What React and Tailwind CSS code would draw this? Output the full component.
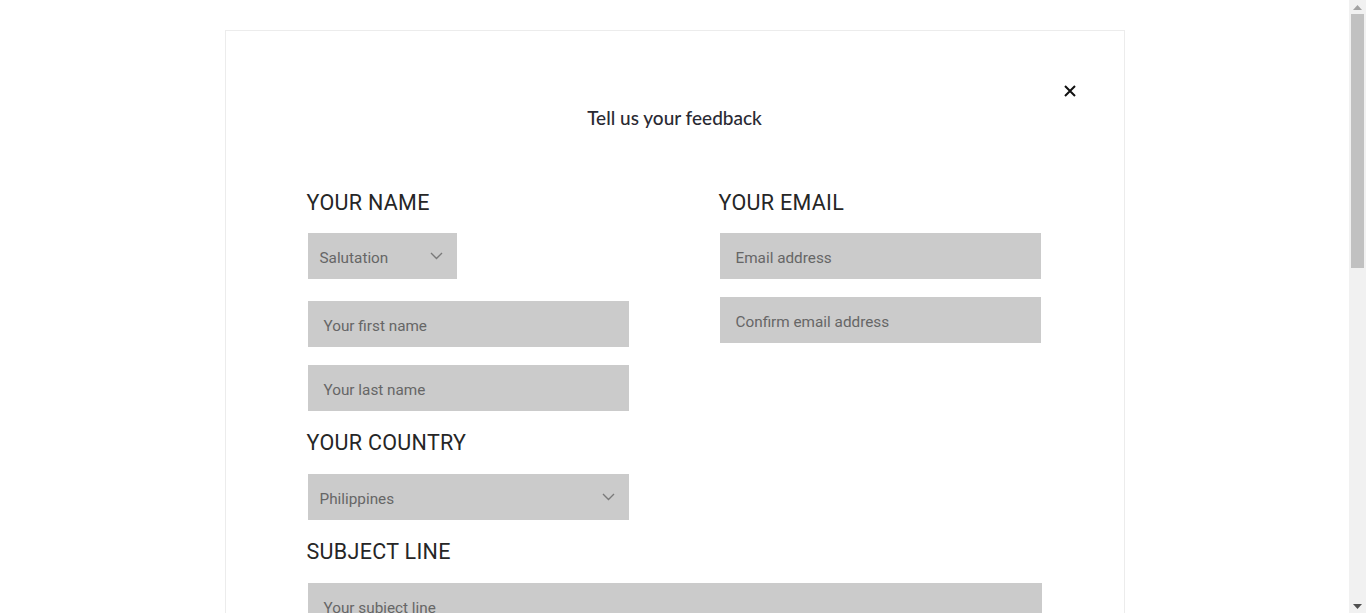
import React from "react";

function Chevron() {
  return (
    <svg width="13" height="8" viewBox="0 0 13 8" fill="none" className="shrink-0">
      <path d="M1 1l5.5 5.5L12 1" stroke="#7a7a7a" strokeWidth="1.4" />
    </svg>
  );
}

function Field({ placeholder, className = "" }) {
  return (
    <div
      className={`ml-px h-[46px] bg-[#cbcbcb] flex items-center pl-4 pt-1 text-[15.3px] text-[#666666] ${className}`}
    >
      {placeholder}
    </div>
  );
}

function Select({ value, width }) {
  return (
    <div
      className={`ml-px h-[46px] bg-[#cbcbcb] flex items-center justify-between pl-3 pr-[14px] text-[15.3px] text-[#666666] ${width}`}
    >
      <span className="pt-1">{value}</span>
      <Chevron />
    </div>
  );
}

function Label({ children }) {
  return (
    <div className="h-6 leading-6 text-[21.5px] tracking-[0.3px] text-[#262626] uppercase">
      {children}
    </div>
  );
}

function Scrollbar() {
  return (
    <div className="fixed right-0 top-0 h-[613px] w-[17px] bg-[#f1f1f1] flex flex-col items-center">
      <div className="h-[14px] flex items-center justify-center">
        <svg width="9" height="5" viewBox="0 0 9 5">
          <path d="M0 5L4.5 0L9 5Z" fill="#a3a3a3" />
        </svg>
      </div>
      <div className="w-[13px] h-[254px] bg-[#c1c1c1]" />
      <div className="flex-1" />
      <div className="h-[14px] flex items-center justify-center">
        <svg width="9" height="5" viewBox="0 0 9 5">
          <path d="M0 0L4.5 5L9 0Z" fill="#505050" />
        </svg>
      </div>
    </div>
  );
}

export default function App() {
  return (
    <div
      className="bg-white h-[613px] overflow-hidden"
      style={{ fontFamily: "Roboto, 'Liberation Sans', sans-serif" }}
    >
      <div className="w-[1349px] pt-[30px]">
        <div className="relative mx-auto w-[900px] border border-[#ececec] pb-20">
          <button className="absolute left-[837px] top-[53px] w-[14px] h-[14px] flex items-center justify-center">
            <svg width="12" height="12" viewBox="0 0 12 12">
              <path d="M1 1l10 10M11 1L1 11" stroke="#111" strokeWidth="2" />
            </svg>
          </button>
          <h1
            className="pt-[74px] text-center text-[19px] leading-[26px] font-medium text-[#2a2a33]"
            style={{ fontFamily: "Lato, 'Noto Sans', sans-serif" }}
          >
            Tell us your feedback
          </h1>
          <div className="mx-[81px] mt-[60px]">
            <div className="flex gap-[89px]">
              <div className="w-[323px] flex flex-col">
                <Label>Your name</Label>
                <div className="mt-[18px]">
                  <Select value="Salutation" width="w-[149px]" />
                </div>
                <Field placeholder="Your first name" className="mt-[22px] w-[321px]" />
                <Field placeholder="Your last name" className="mt-[18px] w-[321px]" />
                <div className="mt-5">
                  <Label>Your country</Label>
                </div>
                <div className="mt-[19px]">
                  <Select value="Philippines" width="w-[321px]" />
                </div>
              </div>
              <div className="w-[323px] flex flex-col">
                <Label>Your email</Label>
                <Field placeholder="Email address" className="mt-[18px] w-[321px]" />
                <Field placeholder="Confirm email address" className="mt-[18px] w-[321px]" />
              </div>
            </div>
            <div className="mt-5">
              <Label>Subject line</Label>
            </div>
            <Field placeholder="Your subject line" className="mt-[19px] w-[734px]" />
            <div className="mt-5">
              <Label>Your message</Label>
            </div>
            <div className="mt-[19px] ml-px w-[734px] h-[160px] bg-[#cbcbcb] pl-4 pt-3 text-[15px] text-[#666666]">
              Your message
            </div>
          </div>
        </div>
      </div>
      <Scrollbar />
    </div>
  );
}
